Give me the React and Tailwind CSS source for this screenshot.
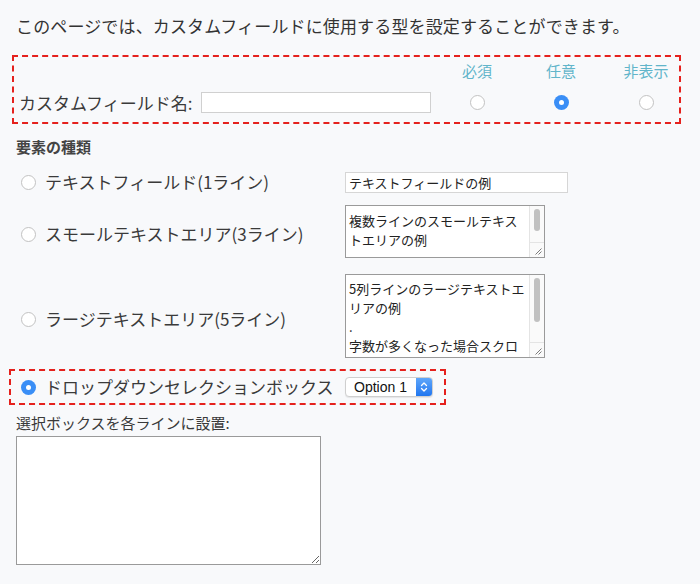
import React from 'react';

function Radio({ checked }) {
  if (checked) {
    return (
      <span className="flex h-[15px] w-[15px] shrink-0 items-center justify-center rounded-full bg-[#3a8ef6]">
        <span className="block h-[5px] w-[5px] rounded-full bg-white" />
      </span>
    );
  }
  return <span className="block h-[15px] w-[15px] shrink-0 rounded-full border border-[#c2c2c2] bg-white" />;
}

function Choice({ label, checked }) {
  return (
    <div className="flex w-[324px] shrink-0 items-center">
      <Radio checked={checked} />
      <span className="ml-[9px] text-[17px] leading-[24px] text-[#3a3a3a]">{label}</span>
    </div>
  );
}

function Column({ label, checked, className }) {
  return (
    <div className={`flex w-[46px] flex-col items-center ${className}`}>
      <span className="text-[15px] leading-[20px] text-[#62b5ca]">{label}</span>
      <div className="mt-[14px]">
        <Radio checked={checked} />
      </div>
    </div>
  );
}

function Grip() {
  return (
    <svg width="8" height="8" viewBox="0 0 8 8" stroke="#7a7a7a" strokeWidth="1" className="mb-[2px] mr-[2px]">
      <line x1="7.5" y1="1.5" x2="1.5" y2="7.5" />
      <line x1="7.5" y1="4.5" x2="4.5" y2="7.5" />
    </svg>
  );
}

// textarea with a mac style scrollbar column
function ScrollBox({ value, height, thumb, padTop }) {
  return (
    <div className={`flex w-[200px] border border-[#9a9a9a] bg-white ${height}`}>
      <textarea
        readOnly
        defaultValue={value}
        className={`min-w-0 flex-1 resize-none overflow-hidden bg-transparent pl-[3px] text-[13px] leading-[19px] text-[#222] outline-none ${padTop}`}
      />
      <div className="flex w-[15px] flex-col border-l border-[#e4e4e4] bg-[#fafafa]">
        <div className="flex-1 px-[4px] pt-[3px]">
          <div className={`rounded-full bg-[#c1c1c1] ${thumb}`} />
        </div>
        <div className="flex h-[15px] items-end justify-end border-t border-[#e4e4e4]">
          <Grip />
        </div>
      </div>
    </div>
  );
}

export default function App() {
  return (
    <div className="min-h-[584px] bg-[#f8f9fb] px-[16px] font-['Noto_Sans_CJK_JP',sans-serif] text-[#333]">
      <p className="pt-[14px] text-[17px] leading-[24px] tracking-[0.14px]">
        このページでは、カスタムフィールドに使用する型を設定することができます。
      </p>

      {/* field name + visibility */}
      <div className="-ml-[4px] mt-[17px] flex w-[669px] border-2 border-dashed border-[#e5211d] pb-[12px] pl-[5px] pt-[4px]">
        <div className="flex h-[15px] items-center self-end">
          <span className="w-[182px] text-[17px] leading-[24px] text-[#3a3a3a]">カスタムフィールド名:</span>
          <input
            type="text"
            className="h-[21px] w-[230px] border border-[#d0d0d0] bg-white px-[3px] text-[13px] outline-none"
          />
        </div>
        <Column label="必須" className="ml-[23px]" />
        <Column label="任意" checked className="ml-[38px]" />
        <Column label="非表示" className="ml-[39px]" />
      </div>

      <h3 className="mt-[13px] text-[15px] font-bold leading-[20px] text-[#444]">要素の種類</h3>

      <div className="mt-[13px] flex items-center pl-[5px]">
        <Choice label="テキストフィールド(1ライン)" />
        <input
          type="text"
          defaultValue="テキストフィールドの例"
          className="h-[21px] w-[223px] border border-[#d6d6d6] bg-white px-[3px] text-[13px] text-[#222] outline-none"
        />
      </div>

      <div className="mt-[11px] flex items-start pl-[5px]">
        <div className="mt-[17px]">
          <Choice label="スモールテキストエリア(3ライン)" />
        </div>
        <ScrollBox
          value="複数ラインのスモールテキストエリアの例"
          height="h-[53px]"
          thumb="h-[22px]"
          padTop="pt-[5px]"
        />
      </div>

      <div className="mt-[16px] flex items-start pl-[5px]">
        <div className="mt-[33px]">
          <Choice label="ラージテキストエリア(5ライン)" />
        </div>
        <ScrollBox
          value={'5列ラインのラージテキストエリアの例\n.\n字数が多くなった場合スクロールバーが表示されます。'}
          height="h-[84px]"
          thumb="h-[44px]"
          padTop="pt-[4px]"
        />
      </div>

      {/* dropdown choice */}
      <div className="-ml-[7px] mt-[11px] flex h-[36px] w-fit items-center border-2 border-dashed border-[#e5211d] pl-[10px] pr-[11px]">
        <Choice label="ドロップダウンセレクションボックス" checked />
        <div className="flex h-[20px] w-[88px] items-stretch overflow-hidden rounded-[4px] border border-[#cfcfcf] bg-white shadow-[0_1px_1px_rgba(0,0,0,0.08)]">
          <span className="flex-1 pl-[8px] font-['Liberation_Sans',sans-serif] text-[14px] leading-[18px] text-[#111]">
            Option 1
          </span>
          <span className="flex w-[16px] items-center justify-center bg-gradient-to-b from-[#5ea6fa] to-[#1f76ef]">
            <svg width="8" height="12" viewBox="0 0 8 12" fill="none" stroke="white" strokeWidth="1.3" strokeLinecap="round" strokeLinejoin="round">
              <path d="M1.5 4.5 L4 2 L6.5 4.5" />
              <path d="M1.5 7.5 L4 10 L6.5 7.5" />
            </svg>
          </span>
        </div>
      </div>

      <p className="mt-[8px] text-[15px] leading-[20px] text-[#3a3a3a]">選択ボックスを各ラインに設置:</p>
      <textarea className="mt-[3px] block h-[129px] w-[305px] resize border border-[#9a9a9a] bg-white text-[13px] outline-none" />
    </div>
  );
}
